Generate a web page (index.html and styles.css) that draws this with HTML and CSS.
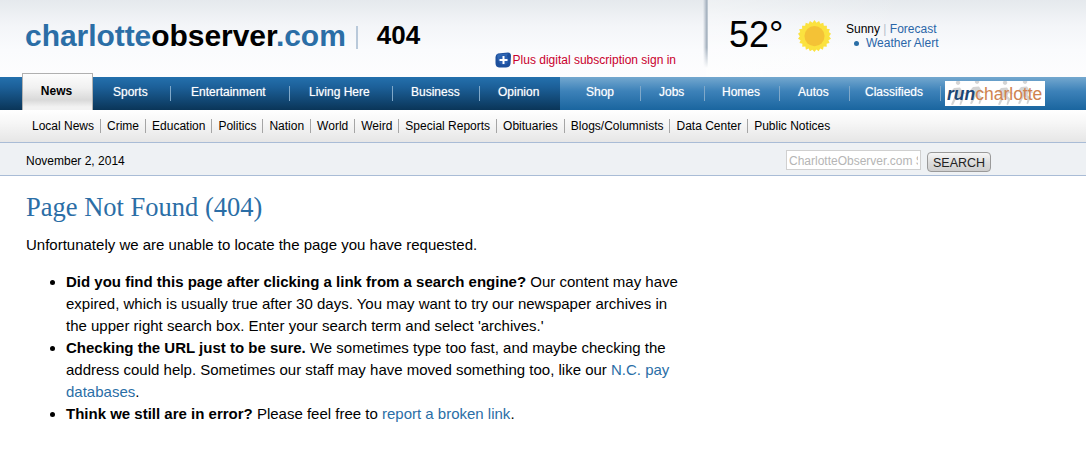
FILE: index.html
```html
<!DOCTYPE html>
<html lang="en">
<head>
<meta charset="utf-8">
<title>Page Not Found (404)</title>
<link rel="stylesheet" href="styles.css">
</head>
<body>
<header class="masthead">
  <div class="brand-col">
    <div class="brand-row">
      <a class="wordmark"><span class="wm-blue">charlotte</span><span class="wm-black">observer</span><span class="wm-blue">.com</span></a>
      <span class="brand-sep"></span>
      <span class="brand-404">404</span>
    </div>
    <a class="plus-link">
      <svg class="plus-icon" viewBox="0 0 16 16" width="16" height="16" aria-hidden="true">
        <path d="M3 1.5 L13 0.5 Q16 0.5 16 4 L15.5 12 Q15 15.5 11 15.5 L4 15.5 Q0.5 15 0.5 11 L0.5 5 Q0.7 2 3 1.5Z" fill="#1d4f9c"/>
        <path d="M2 2.5 L13 1.5 L11 6 L3 9 Z" fill="#3b73bf" opacity=".7"/>
        <circle cx="8.5" cy="8" r="5" fill="#2a5fb0"/>
        <path d="M8.5 4 V12 M4.5 8 H12.5" stroke="#fff" stroke-width="2"/>
      </svg>
      <span>Plus digital subscription sign in</span>
    </a>
  </div>
  <div class="weather">
    <span class="temp">52°</span>
    <svg class="sun" viewBox="0 0 36 36" width="33" height="33" aria-hidden="true">
      <polygon fill="#fbe23f" points="18,0 20.2,3 23,1 24.4,4.2 27.6,3 28.2,6.4 31.6,6.2 31.4,9.6 34.8,10 33.6,13 36,15 34,17.6 36,20.4 33.2,22 34.4,25 31.2,25.8 31.4,29.2 28,29 27.2,32.4 24.2,31.2 22.6,34.2 20,32.2 18,35 15.6,32.4 13,34.2 11.6,31.2 8.6,32.4 8,29 4.6,29.2 4.8,25.8 1.6,25 2.8,22 0,20.4 2,17.6 0,15 2.4,13 1.2,10 4.6,9.6 4.4,6.2 7.8,6.4 8.4,3 11.6,4.2 13,1 15.8,3"/>
      <circle cx="18" cy="17.5" r="11" fill="#f4c236"/>
    </svg>
    <div class="wx-links">
      <div class="wx-line">Sunny <span class="wx-pipe">|</span> <a class="wx-link">Forecast</a></div>
      <div class="wx-line wx-alert"><span class="wx-dot"></span><a class="wx-link">Weather Alert</a></div>
    </div>
  </div>
</header>

<nav class="mainnav">
  <div class="nav-dark">
    <a class="tab">News</a>
    <a class="nav-item sep n-sports">Sports</a>
    <a class="nav-item sep n-ent">Entertainment</a>
    <a class="nav-item sep n-living">Living Here</a>
    <a class="nav-item sep n-business">Business</a>
    <a class="nav-item n-opinion">Opinion</a>
  </div>
  <div class="nav-light">
    <a class="nav-item sep n-shop">Shop</a>
    <a class="nav-item sep n-jobs">Jobs</a>
    <a class="nav-item sep n-homes">Homes</a>
    <a class="nav-item sep n-autos">Autos</a>
    <a class="nav-item sep n-class">Classifieds</a>
    <a class="run-logo">
      <svg class="runners" viewBox="0 0 100 25" width="100" height="25" aria-hidden="true">
        <g fill="#d4d4d4">
          <path d="M13 4 a2.200 2.200 0 1 1 .1 0Z M9 7 L15 6.500 L18 11 L21 12 L20.500 13 L16.500 12 L15.500 15 L18.500 18 L16 24 L14.500 23.500 L15.800 18.800 L12 16 L8 24 L6 23.500 L9.500 15.500 L10.500 10 L8 12 L5.500 11 Z"/>
          <path d="M32 3 a2.200 2.200 0 1 1 .1 0Z M28 6 L34 5.500 L37 10 L40 11 L39.500 12 L35.500 11 L34.500 14 L37.500 17 L35 23 L33.500 22.500 L34.800 17.800 L31 15 L27 23 L25 22.500 L28.500 14.500 L29.500 9 L27 11 L24.500 10 Z"/>
          <path d="M60 4 a2.200 2.200 0 1 1 .1 0Z M56 7 L62 6.500 L65 11 L68 12 L67.500 13 L63.500 12 L62.500 15 L65.500 18 L63 24 L61.500 23.500 L62.800 18.800 L59 16 L55 24 L53 23.500 L56.500 15.500 L57.500 10 L55 12 L52.500 11 Z"/>
          <path d="M80 3 a2.200 2.200 0 1 1 .1 0Z M76 6 L82 5.500 L85 10 L88 11 L87.500 12 L83.500 11 L82.500 14 L85.500 17 L83 23 L81.500 22.500 L82.800 17.800 L79 15 L75 23 L73 22.500 L76.500 14.500 L77.500 9 L75 11 L72.500 10 Z"/>
        </g>
      </svg>
      <span class="run-text"><span class="run-run">run</span><span class="run-city">charlotte</span></span>
    </a>
  </div>
</nav>

<nav class="subnav">
  <a class="sub-item">Local News</a>
  <a class="sub-item">Crime</a>
  <a class="sub-item">Education</a>
  <a class="sub-item">Politics</a>
  <a class="sub-item">Nation</a>
  <a class="sub-item">World</a>
  <a class="sub-item">Weird</a>
  <a class="sub-item">Special Reports</a>
  <a class="sub-item">Obituaries</a>
  <a class="sub-item">Blogs/Columnists</a>
  <a class="sub-item">Data Center</a>
  <a class="sub-item">Public Notices</a>
</nav>

<div class="datebar">
  <span class="date">November 2, 2014</span>
  <form class="search">
    <input class="search-input" type="text" placeholder="CharlotteObserver.com Search">
    <button class="search-btn" type="button">SEARCH</button>
  </form>
</div>

<main class="content">
  <h1 class="title">Page Not Found (404)</h1>
  <p class="lead">Unfortunately we are unable to locate the page you have requested.</p>
  <ul class="tips">
    <li><b>Did you find this page after clicking a link from a search engine?</b> Our content may have expired, which is usually true after 30 days. You may want to try our newspaper archives in the upper right search box. Enter your search term and select 'archives.'</li>
    <li><b>Checking the URL just to be sure.</b> We sometimes type too fast, and maybe checking the address could help. Sometimes our staff may have moved something too, like our <a class="link">N.C. pay databases</a>.</li>
    <li><b>Think we still are in error?</b> Please feel free to <a class="link">report a broken link</a>.</li>
  </ul>
</main>
</body>
</html>
```
FILE: styles.css
```css
* { box-sizing: border-box; }
html, body { margin: 0; padding: 0; }
body {
  background: #fff;
  color: #000;
  font-family: "Liberation Sans", Arial, sans-serif;
  font-size: 12px;
  width: 1086px;
  overflow-x: hidden;
}

/* masthead */
.masthead {
  display: flex;
  height: 77px;
  background: linear-gradient(#e5e9ed 0, #f3f5f8 25px, #fafbfd 50px, #fdfdfe 77px);
}
.brand-col {
  width: 706px;
  padding: 19px 30px 0 25px;
  display: flex;
  flex-direction: column;
}
.brand-row { display: flex; align-items: center; height: 34px; }
.wordmark {
  font-size: 30px;
  font-weight: bold;
  letter-spacing: -0.05px;
  line-height: 34px;
  white-space: nowrap;
}
.wm-blue { color: #2b6ea6; }
.wm-black { color: #000; }
.brand-sep {
  width: 2px;
  height: 23px;
  background: #b9c9da;
  margin: 2px 19px 0 10px;
}
.brand-404 { font-size: 26px; font-weight: bold; line-height: 30px; margin-top: -3px; }
.plus-link {
  display: flex;
  align-items: center;
  gap: 2px;
  align-self: flex-end;
  margin-top: -1px;
  color: #c9002c;
  font-size: 12px;
  line-height: 16px;
}
.weather {
  flex: 1;
  display: flex;
  align-items: flex-start;
  padding: 14px 0 0 23px;
  position: relative;
  background: linear-gradient(90deg, rgba(255,255,255,.35), rgba(255,255,255,0) 200px);
}
.weather::before {
  content: "";
  position: absolute;
  left: -3px;
  top: 0;
  width: 5px;
  height: 68px;
  background: linear-gradient(90deg, rgba(175,185,197,0), #a8b4c1 70%, #c9d2da 100%);
  -webkit-mask-image: linear-gradient(#000 70%, transparent);
  mask-image: linear-gradient(#000 70%, transparent);
}
.temp { font-size: 36px; line-height: 42px; width: 69px; flex: none; }
.sun { margin-top: 6px; flex: none; }
.wx-links { margin: 8px 0 0 15px; font-size: 12px; line-height: 14px; }
.wx-line { height: 14px; white-space: nowrap; }
.wx-pipe { color: #b5bfca; }
.wx-link { color: #2a66a8; }
.wx-alert { display: flex; align-items: center; padding-left: 8px; }
.wx-dot {
  width: 5px;
  height: 5px;
  border-radius: 50%;
  background: #2a6ea6;
  margin-right: 7px;
}

/* primary navigation */
.mainnav { display: flex; height: 33px; }
.nav-dark {
  width: 560px;
  flex: none;
  padding-left: 22px;
  display: flex;
  align-items: center;
  background: linear-gradient(#2470ad 0, #1c6099 10px, #0a3558 33px);
}
.nav-light {
  flex: 1;
  display: flex;
  align-items: center;
  background: linear-gradient(#74a8cf 0, #3d82b9 14px, #1a659f 33px);
}
.nav-item {
  color: #fff;
  font-size: 12px;
  line-height: 16px;
  white-space: nowrap;
  text-shadow: 0 0 1px rgba(255,255,255,.6);
  margin-bottom: 4px;
  flex: none;
  position: relative;
}
.sep::after {
  content: "";
  position: absolute;
  right: 0;
  top: 2px;
  width: 1px;
  height: 15px;
  background: #7fa8c9;
}
.n-sports { width: 78px; padding-left: 20px; }
.n-ent { width: 119px; padding-left: 20px; }
.n-living { width: 103px; padding-left: 19px; }
.n-business { width: 87px; padding-left: 18px; }
.n-opinion { width: 80px; padding-left: 18px; }
.n-shop { width: 81px; padding-left: 26px; }
.n-jobs { width: 64px; padding-left: 18px; }
.n-homes { width: 75px; padding-left: 17px; }
.n-autos { width: 70px; padding-left: 18px; }
.n-class { width: 91px; padding-left: 15px; }
.tab {
  width: 71px;
  height: 37px;
  flex: none;
  margin-top: -4px;
  align-self: flex-start;
  background: linear-gradient(#fdfdfd 0, #f0f0f0 14px, #d9d9d9 26px, #f2f2f2 33px);
  border: 1px solid #b0b0b0;
  border-bottom: 0;
  color: #000;
  font-size: 12px;
  font-weight: bold;
  text-align: center;
  line-height: 35px;
  padding-right: 2px;
}
.run-logo {
  display: block;
  position: relative;
  flex: none;
  width: 100px;
  height: 25px;
  margin-left: 4px;
  background: #fff;
}
.runners { position: absolute; left: 0; top: 0; }
.run-text {
  position: absolute;
  left: 2px;
  top: 3px;
  font-size: 17.5px;
  line-height: 20px;
  white-space: nowrap;
}
.run-run { color: #1c4674; font-weight: bold; font-style: italic; }
.run-city { color: #cf8350; }

/* secondary navigation */
.subnav {
  height: 33px;
  padding: 0 0 1px 26px;
  display: flex;
  align-items: center;
  background: linear-gradient(#fff 0, #f7f7f7 12px, #e6e6e6 32px);
  border-bottom: 1px solid #a9bcd6;
}
.sub-item {
  font-size: 12px;
  line-height: 14px;
  padding: 0 6px;
  border-left: 1px solid #a5a5a5;
  white-space: nowrap;
}
.sub-item:first-child { border-left: 0; }

/* date bar */
.datebar {
  height: 33px;
  background: #eef1f4;
  border-bottom: 1px solid #a9bcd6;
  display: flex;
  align-items: center;
  padding: 4px 0 0 26px;
}
.date { font-size: 12px; width: 760px; flex: none; }
.search { display: flex; align-items: flex-start; }
.search-input {
  width: 135px;
  height: 20px;
  border: 1px solid #d0d0d0;
  background: #fff;
  padding: 1px 2px 0;
  font: 12px "Liberation Sans", Arial, sans-serif;
  margin: 0;
}
.search-input::placeholder { color: #b5b5b5; opacity: 1; }
.search-btn {
  width: 64px;
  height: 20px;
  margin: 2px 0 0 6px;
  padding: 1px 0 0;
  border: 1px solid #9a9a9a;
  border-radius: 4px;
  background: linear-gradient(#f6f6f6, #dcdcdc 55%, #cfcfcf);
  color: #222;
  font: 12.5px "Liberation Sans", Arial, sans-serif;
}

/* content */
.content { padding: 0 0 0 26px; width: 686px; }
.title {
  margin: 16px 0 0;
  font-family: "Liberation Serif", Georgia, serif;
  font-weight: normal;
  font-size: 26.5px;
  line-height: 30px;
  color: #2b6ea6;
}
.lead { margin: 12px 0 0; font-size: 15px; line-height: 22px; }
.tips {
  margin: 15px 0 0;
  padding: 0 0 0 40px;
  font-size: 15px;
  line-height: 22px;
}
.link { color: #2a6ea6; }
```
